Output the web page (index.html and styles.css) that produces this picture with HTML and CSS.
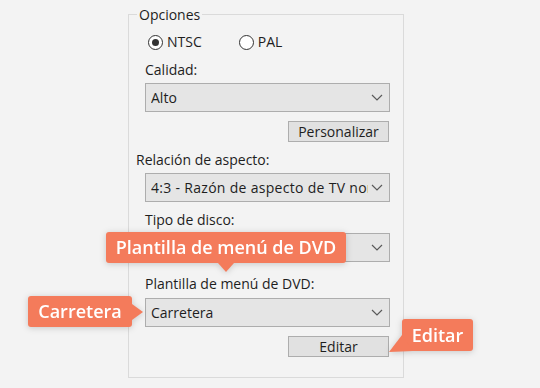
FILE: index.html
```html
<!DOCTYPE html>
<html lang="es">

<head>
  <meta charset="UTF-8" />
  <meta name="viewport" content="width=device-width, initial-scale=1.0" />
  <title>Opciones de DVD</title>
  <link rel="stylesheet" href="styles.css">
</head>

<body>
  <div class="page">
    <div class="group">
      <span class="legend">Opciones</span>

      <div class="radios">
        <label class="radio"><span class="dot checked"></span>NTSC</label>
        <label class="radio"><span class="dot"></span>PAL</label>
      </div>

      <div class="label">Calidad:</div>
      <div class="select">
        <span class="value">Alto</span>
        <svg width="12" height="7" viewBox="0 0 12 7"><polyline points="1,1 6,6 11,1" fill="none" stroke="#5a5a5a" stroke-width="1.2" /></svg>
      </div>
      <div class="btn-row"><span class="btn">Personalizar</span></div>

      <div class="label label-out">Relación de aspecto:</div>
      <div class="select">
        <span class="value value-wide">4:3 - Razón de aspecto de TV normal</span>
        <svg width="12" height="7" viewBox="0 0 12 7"><polyline points="1,1 6,6 11,1" fill="none" stroke="#5a5a5a" stroke-width="1.2" /></svg>
      </div>

      <div class="label">Tipo de disco:</div>
      <div class="select">
        <span class="value"></span>
        <svg width="12" height="7" viewBox="0 0 12 7"><polyline points="1,1 6,6 11,1" fill="none" stroke="#5a5a5a" stroke-width="1.2" /></svg>
      </div>

      <div class="label label-gap">Plantilla de menú de DVD:</div>
      <div class="select">
        <span class="value">Carretera</span>
        <svg width="12" height="7" viewBox="0 0 12 7"><polyline points="1,1 6,6 11,1" fill="none" stroke="#5a5a5a" stroke-width="1.2" /></svg>
      </div>
      <div class="btn-row"><span class="btn">Editar</span></div>
    </div>

    <!-- callouts over the form -->
    <div class="callout callout-down tip-menu">Plantilla de menú de DVD</div>
    <div class="callout callout-right tip-road">Carretera</div>
    <div class="callout callout-left tip-edit">Editar</div>
  </div>
</body>

</html>
```

FILE: styles.css
```css
* {
  box-sizing: border-box;
  font-family: 'Open Sans', sans-serif;
}

body {
  margin: 0;
  background-color: #f3f3f3;
  color: #1e1e1e;
  font-size: 14px;
}

.page {
  position: relative;
  width: 540px;
  height: 388px;
  overflow: hidden;
}

.group {
  margin: 14px 0 0 128px;
  width: 276px;
  height: 364px;
  border: 1px solid #dadada;
  padding: 0 13px 0 16px;
}

.legend {
  display: block;
  width: max-content;
  margin: -10px 0 0 -8px;
  padding: 0 2px;
  background-color: #f3f3f3;
  line-height: 19px;
}

.radios {
  display: flex;
  gap: 37px;
  margin: 9px 0 0 3px;
  line-height: 18px;
}

.radio {
  display: flex;
  align-items: center;
  gap: 4px;
}

.dot {
  width: 15px;
  height: 15px;
  border: 1px solid #333;
  border-radius: 50%;
  background-color: #fff;
  display: flex;
  align-items: center;
  justify-content: center;
}

.dot.checked::after {
  content: '';
  width: 7px;
  height: 7px;
  border-radius: 50%;
  background-color: #333;
}

.label {
  margin-top: 9px;
  line-height: 18px;
}

.radios + .label {
  margin-top: 10px;
}

.label-out {
  margin-left: -9px;
}

.label-gap {
  margin-top: 13px;
}

.select {
  display: flex;
  align-items: center;
  height: 29px;
  margin-top: 4px;
  padding: 0 6px 0 5px;
  background-color: #e5e5e5;
  border: 1px solid #adadad;
}

.label-gap + .select {
  margin-top: 5px;
}

.select .value {
  flex: 1;
  overflow: hidden;
  white-space: nowrap;
  margin-right: 3px;
}

.select .value-wide {
  letter-spacing: 0.3px;
}

.btn-row {
  display: flex;
  justify-content: flex-end;
  margin: 9px 1px 0 0;
}

.btn {
  width: 101px;
  height: 21px;
  line-height: 19px;
  text-align: center;
  background-color: #e1e1e1;
  border: 1px solid #adadad;
}

.callout {
  position: absolute;
  background-color: #f47b5b;
  color: #fff;
  font-size: 18px;
  font-weight: 600;
  line-height: 31px;
  border-radius: 3px;
  text-align: center;
  white-space: nowrap;
  filter: drop-shadow(0 1px 3px rgba(0, 0, 0, 0.18));
}

.callout::after {
  content: '';
  position: absolute;
  background-color: #f47b5b;
}

.tip-menu {
  left: 106px;
  top: 232px;
  width: 240px;
  height: 31px;
}

.callout-down::after {
  left: 112px;
  top: 100%;
  width: 16px;
  height: 9px;
  clip-path: polygon(0 0, 100% 0, 50% 100%);
}

.tip-road {
  left: 28px;
  top: 296px;
  width: 104px;
  height: 31px;
}

.callout-right::after {
  left: 100%;
  top: 8px;
  width: 11px;
  height: 16px;
  clip-path: polygon(0 0, 100% 50%, 0 100%);
}

.tip-edit {
  left: 402px;
  top: 319px;
  width: 71px;
  height: 32px;
  line-height: 32px;
}

.callout-left::after {
  left: -13px;
  top: 16px;
  width: 24px;
  height: 17px;
  clip-path: polygon(13px 0, 24px 16px, 0 17px);
}
```
